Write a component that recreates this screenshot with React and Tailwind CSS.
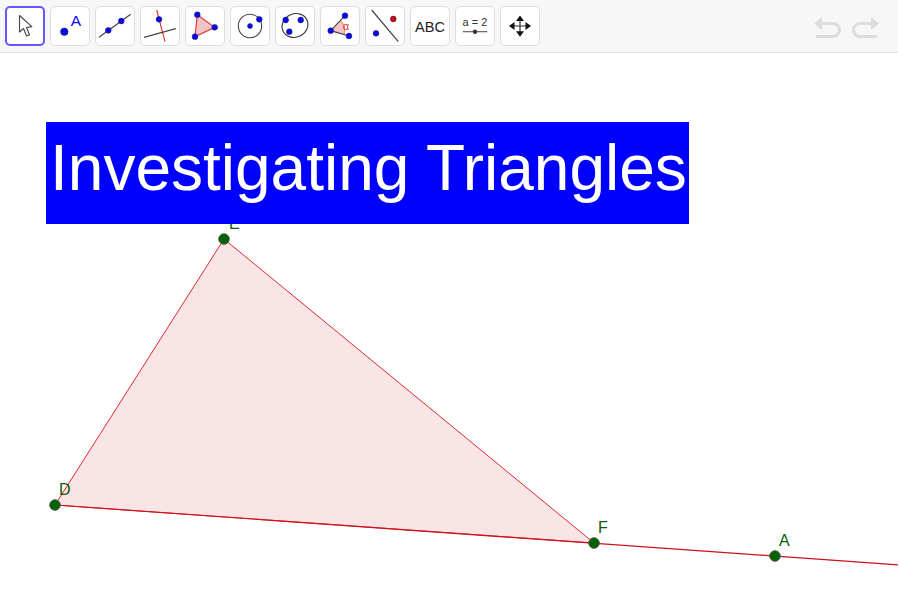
const BLUE = '#0808e8';
const RED = '#e0383e';

const Dot = ({ x, y, r = 2.9, fill = BLUE }) => (
  <circle cx={x} cy={y} r={r} fill={fill} stroke="#1a1a6a" strokeWidth="0.5" />
);

// toolbar icons, each drawn in the 40x40 box of its button
const tools = [
  <path key="move" d="M14.5 9.5V26l4-3.5 3 7.5 3-1.2-3-7.3 5.3-.9z" fill="#fff" stroke="#444" strokeWidth="1.1" strokeLinejoin="round" />,
  <g key="point">
    <Dot x={14.3} y={25.7} r={3.8} />
    <text x={26} y={20.2} textAnchor="middle" fontSize="15.5" fill={BLUE} fontFamily="Liberation Sans, sans-serif">A</text>
  </g>,
  <g key="line">
    <path d="M4 31.3 35.7 8.3" stroke="#444" strokeWidth="1.2" />
    <Dot x={13.3} y={24.3} />
    <Dot x={26.3} y={15} />
  </g>,
  <g key="perp">
    <path d="M16.7 4 25 35.7" stroke={RED} strokeWidth="1.2" />
    <path d="M4 31.3 35.7 22.7" stroke="#444" strokeWidth="1.2" />
    <Dot x={19} y={13.3} />
  </g>,
  <g key="polygon">
    <path d="M12.3 8.7 29.7 21.3 10 30.7z" fill="#f2c4c4" stroke={RED} strokeWidth="1.2" />
    <Dot x={12.3} y={8.7} />
    <Dot x={29.7} y={21.3} />
    <Dot x={10} y={30.7} />
  </g>,
  <g key="circle">
    <circle cx="20" cy="20" r="11.7" fill="none" stroke="#444" strokeWidth="1.1" />
    <Dot x={20} y={20} r={2.5} />
    <Dot x={29.3} y={13.3} />
  </g>,
  <g key="ellipse">
    <ellipse cx="20" cy="19.5" rx="13.2" ry="11.6" transform="rotate(-25 20 19.5)" fill="none" stroke="#333" strokeWidth="1.1" />
    <Dot x={10.7} y={14} />
    <Dot x={25.7} y={14} />
    <Dot x={14.3} y={25.7} />
  </g>,
  <g key="angle">
    <path d="M10.7 24.7 20.5 14.5A14 14 0 0 1 24 28.6z" fill="#f2c4c4" />
    <path d="M20.5 14.5A14 14 0 0 1 24 28.6" fill="none" stroke={RED} strokeWidth="0.6" />
    <path d="M25 9.7 10.7 24.7 29 30" fill="none" stroke="#444" strokeWidth="1.2" />
    <Dot x={25} y={9.7} />
    <Dot x={10.7} y={24.7} />
    <Dot x={29} y={30} />
    <text x={26} y={24.2} textAnchor="middle" fontSize="11" fill={RED} fontFamily="Liberation Sans, sans-serif">α</text>
  </g>,
  <g key="parallel">
    <path d="M6.7 4 33.3 35.7" stroke="#444" strokeWidth="1.2" />
    <Dot x={11} y={27.3} />
    <Dot x={28.3} y={13} fill="#d80000" />
  </g>,
  <text key="abc" x={20} y={25.5} textAnchor="middle" fontSize="14.5" fill="#222" fontFamily="Liberation Sans, sans-serif">ABC</text>,
  <g key="slider">
    <text x={20} y={19.5} textAnchor="middle" fontSize="11" fill="#333" fontFamily="Liberation Sans, sans-serif">a = 2</text>
    <path d="M7.7 25.7H32.3" stroke="#555" strokeWidth="1.1" />
    <circle cx="20" cy="25.7" r="2.2" fill="#333" />
  </g>,
  <g key="pan">
    <path d="M20 12V28M12 20H28" stroke="#333" strokeWidth="1.2" />
    <path d="M20 9.5 24 15H16zM20 30.7 16 25.2H24zM9 20 14.5 16V24zM31 20 25.5 24V16z" fill="#111" />
  </g>,
];

const App = () => {
  return (
    <div className="w-[900px] h-[600px] flex flex-col bg-white overflow-hidden font-['Liberation_Sans',sans-serif]">
      <div className="w-[898px] h-[53px] shrink-0 flex items-center gap-[5px] pl-[5px] pb-px bg-[#f7f7f7] border-b border-[#e0e0e0]">
        {tools.map((icon, i) => (
          <button
            key={i}
            className={
              i === 0
                ? 'w-10 h-10 rounded-[5px] bg-white border-2 border-[#6557ff]'
                : 'w-10 h-10 rounded-[5px] bg-white border border-[#dedede]'
            }
          >
            <svg viewBox={i === 0 ? '2 2 36 36' : '1 1 38 38'} className="block w-full h-full">
              {icon}
            </svg>
          </button>
        ))}
        <div className="ml-auto mr-[19px] flex gap-[9px]">
          <svg viewBox="0 0 28 24" className="w-7 h-6 block">
            <path d="M0 9.5 8 3V16z" fill="#dcdcdc" />
            <path d="M5 9.5H19a6.2 6.2 0 0 1 0 13H2" fill="none" stroke="#dcdcdc" strokeWidth="3" />
          </svg>
          <svg viewBox="0 0 28 24" className="w-7 h-6 block">
            <path d="M28 9.5 20 3V16z" fill="#dcdcdc" />
            <path d="M23 9.5H9a6.2 6.2 0 0 0 0 13H26" fill="none" stroke="#dcdcdc" strokeWidth="3" />
          </svg>
        </div>
      </div>

      <div className="relative flex-1">
        <svg viewBox="0 53 900 547" className="block w-[900px] h-[547px]">
          <path d="M55 505 224 239 594 543z" fill="#f9e5e5" stroke="#d8131b" strokeWidth="0.9" />
          <path d="M55 505 898 564.8" stroke="#d0101a" strokeWidth="1.2" />
          <g fill="#0b5c0b" fontSize="16" fontFamily="Liberation Sans, sans-serif">
            <text x="229" y="229">E</text>
            <text x="59" y="494.5">D</text>
            <text x="598" y="533">F</text>
            <text x="779" y="546">A</text>
          </g>
          <g fill="#006400" stroke="#555" strokeWidth="1">
            <circle cx="224" cy="239" r="5.3" />
            <circle cx="55" cy="505" r="5.3" />
            <circle cx="594" cy="543" r="5.3" />
            <circle cx="775" cy="556" r="5.3" />
          </g>
        </svg>
        <div className="absolute left-[46px] top-[69px] w-[643px] h-[102px] pl-1 bg-[#0000ff] text-white text-[64px] leading-[92px] whitespace-nowrap">
          Investigating Triangles
        </div>
      </div>
    </div>
  );
};

export default App;
